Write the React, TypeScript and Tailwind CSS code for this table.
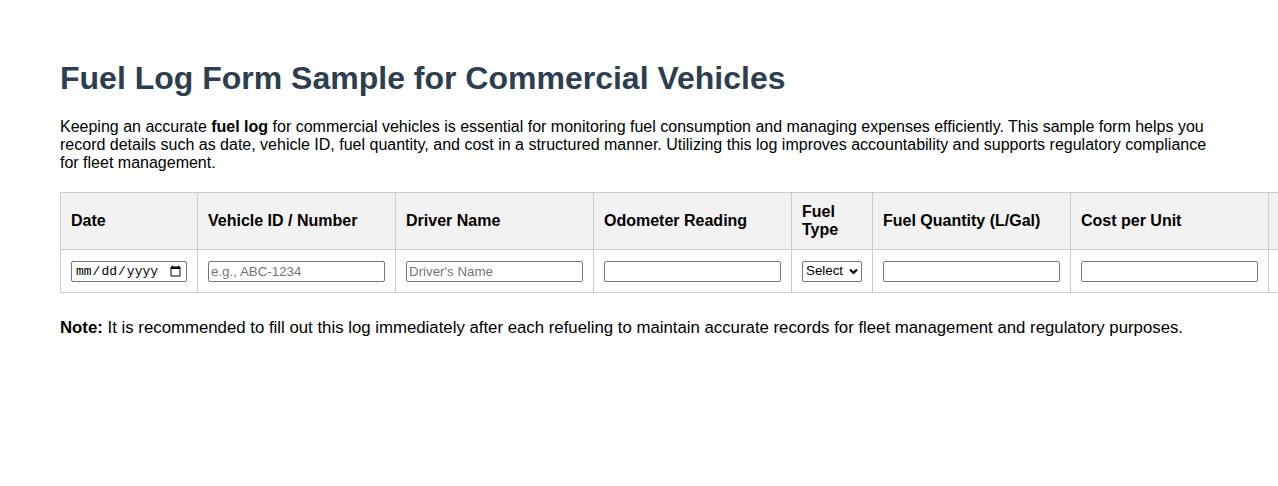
const COLS = [
  { label: 'Date', w: 'w-[137px]' },
  { label: 'Vehicle ID / Number', w: 'w-[198px]' },
  { label: 'Driver Name', w: 'w-[198px]' },
  { label: 'Odometer Reading', w: 'w-[198px]' },
  { label: 'Fuel Type', w: 'w-[81px]' },
  { label: 'Fuel Quantity (L/Gal)', w: 'w-[198px]' },
  { label: 'Cost per Unit', w: 'w-[198px]' },
  { label: '', w: 'w-[198px]' },
]

const inputCls = 'block w-full h-[21px] border border-[#767676] rounded-[2px] px-[2px] text-[13.33px] leading-none bg-white placeholder:text-[#757575]'
const tdCls = 'border border-[#cccccc] px-[10px] py-[10px] leading-none align-middle'

export default function App() {
  return (
    <div className="w-full overflow-hidden px-[60px] pt-[39px] pb-10 bg-white text-black font-['Liberation_Sans',Arial,sans-serif] text-base">
      <h1 className="text-[32px] leading-[37px] font-bold text-[#2c3e50] mt-[21px] mb-[21px]">
        Fuel Log Form Sample for Commercial Vehicles
      </h1>
      <p className="leading-[18px] mb-[20px]">
        Keeping an accurate <strong>fuel log</strong> for commercial vehicles is essential for monitoring fuel consumption and managing expenses efficiently. This sample form helps you record details such as date, vehicle ID, fuel quantity, and cost in a structured manner. Utilizing this log improves accountability and supports regulatory compliance for fleet management.
      </p>
      <table className="border-collapse table-fixed w-[1406px]">
        <thead>
          <tr className="h-[57px] bg-[#f2f2f2]">
            {COLS.map((c, i) => (
              <th key={i} className={`${c.w} border border-[#cccccc] px-[10px] py-[10px] text-left font-bold leading-[18px] align-middle`}>
                {c.label}
              </th>
            ))}
          </tr>
        </thead>
        <tbody>
          <tr className="h-[43px]">
            <td className={tdCls}>
              <input type="date" className={`${inputCls} font-['Liberation_Mono',monospace] text-[13px] pl-[3px]`} />
            </td>
            <td className={tdCls}>
              <input type="text" placeholder="e.g., ABC-1234" className={inputCls} />
            </td>
            <td className={tdCls}>
              <input type="text" placeholder="Driver's Name" className={inputCls} />
            </td>
            <td className={tdCls}>
              <input type="number" className={inputCls} />
            </td>
            <td className={tdCls}>
              <div className="relative w-[60px]">
                <select className="block w-[60px] h-[21px] appearance-none border border-[#767676] rounded-[2px] text-[13.33px] leading-none bg-white pl-[3px] pr-[14px]">
                  <option>Select</option>
                  <option>Diesel</option>
                  <option>Gasoline</option>
                  <option>CNG</option>
                </select>
                <svg className="pointer-events-none absolute right-[4px] top-[7px]" width="9" height="7" viewBox="0 0 9 7" fill="none">
                  <path d="M1 1.5 L4.5 5 L8 1.5" stroke="#000" strokeWidth="2" />
                </svg>
              </div>
            </td>
            <td className={tdCls}>
              <input type="number" className={inputCls} />
            </td>
            <td className={tdCls}>
              <input type="number" className={inputCls} />
            </td>
            <td className={tdCls}>
              <input type="number" className={inputCls} />
            </td>
          </tr>
        </tbody>
      </table>
      <p className="text-[16.8px] leading-[18px] mt-[26px]">
        <strong>Note:</strong> It is recommended to fill out this log immediately after each refueling to maintain accurate records for fleet management and regulatory purposes.
      </p>
    </div>
  )
}
